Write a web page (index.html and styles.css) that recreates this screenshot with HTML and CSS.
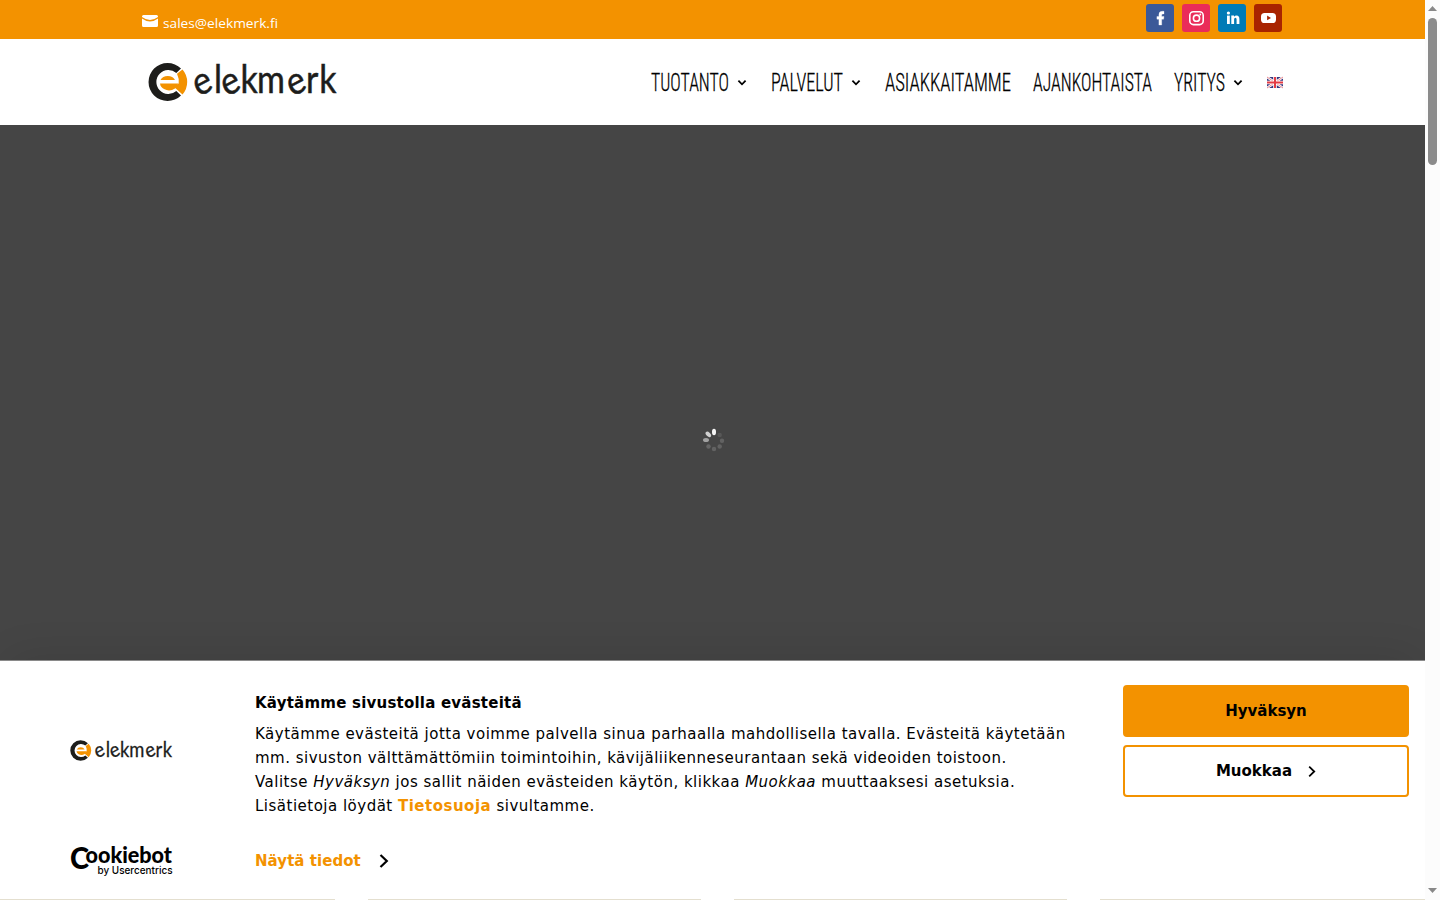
FILE: index.html
```
<!DOCTYPE html>
<html lang="fi">
<head>
    <meta charset="UTF-8">
    <meta name="viewport" content="width=device-width, initial-scale=1.0">
    <title>Elekmerk</title>
    <link rel="stylesheet" href="styles.css">
</head>
<body>

<!-- Shared symbols -->
<svg class="symbols" width="0" height="0">
    <symbol id="logo" viewBox="0 0 190 42">
        <path class="logo-dark" d="M33 7.600A19 19 0 1 0 33 34.400L28.300 30A12 12 0 1 1 28.300 12Z"/>
        <path class="logo-orange" d="M34.500 8.500A19 19 0 0 1 34.500 33.500L29.500 29L26 26L30.700 22.500V18L29 12.800Z"/>
        <path class="logo-orange" d="M12.500 19A8 7 0 0 1 27 19Z"/>
        <path class="logo-orange" d="M12 22.500H30.500L27 27.500Q21.500 31 16 28Q12.500 26 12 22.500Z"/>
        <g transform="scale(.88 1)">
            <text class="logo-text" x="57 75 89 105 124 163.500 179.500 194.500" y="36.200 32.300 36.200 32.300 32.300 36.200 32.300 32.300" rotate="-25 0 -25 0 0 -25 0 0">elekmerk</text>
        </g>
    </symbol>
    <symbol id="chevron" viewBox="0 0 10 16">
        <path d="M1.500 2L7.800 8L1.500 14" fill="none" stroke="currentColor" stroke-width="2.200"/>
    </symbol>
    <symbol id="arrow" viewBox="0 0 10 8">
        <path d="M1.400 1.700L5 5.300L8.600 1.700" fill="none" stroke="currentColor" stroke-width="1.800"/>
    </symbol>
</svg>

<div class="page">
    <div class="top-bar">
        <a class="mail" href="#">
            <svg width="16" height="12" viewBox="0 0 16 12">
                <path d="M1.500 0H14.500Q16 0 16 1.500V2Q8 8 0 2V1.500Q0 0 1.500 0ZM0 3.500Q8 9.500 16 3.500V10.500Q16 12 14.500 12H1.500Q0 12 0 10.500Z" fill="#fff"/>
            </svg>
            <svg class="mail-text" width="116" height="20"><text x="0" y="14" textLength="115" lengthAdjust="spacingAndGlyphs">sales@elekmerk.fi</text></svg>
        </a>
        <div class="social">
            <a class="facebook" href="#"><svg width="28" height="28"><path d="M12.900 21V15.200H10.900V12.500H12.900V10.700Q12.900 7.300 16.200 7.300H18V9.900H16.900Q15.700 9.900 15.700 11V12.500H18L17.600 15.200H15.700V21Z" fill="#fff" stroke="#fff" stroke-width=".3"/></svg></a>
            <a class="instagram" href="#"><svg width="28" height="28" fill="none" stroke="#fff"><rect x="7.800" y="7.800" width="13.400" height="12.800" rx="3.600" stroke-width="1.600"/><circle cx="14.500" cy="14.200" r="3.100" stroke-width="1.600"/><circle cx="18.300" cy="10.500" r=".9" fill="#fff" stroke="none"/></svg></a>
            <a class="linkedin" href="#"><svg width="28" height="28" fill="#fff"><circle cx="10.400" cy="9" r="1.600"/><rect x="9" y="11.600" width="2.800" height="8.400"/><path d="M13.300 11.600H16V12.800Q16.900 11.400 18.600 11.400Q21.400 11.400 21.400 14.900V20H18.600V15.500Q18.600 13.700 17.400 13.700Q16.100 13.700 16.100 15.500V20H13.300Z"/></svg></a>
            <a class="youtube" href="#"><svg width="28" height="28"><rect x="7" y="9" width="15" height="10" rx="3.600" fill="#fff"/><path d="M13.100 11.600L17 14L13.100 16.300Z" fill="#a82400"/></svg></a>
        </div>
    </div>

    <header class="header">
        <svg class="logo" width="190" height="42"><use href="#logo"/></svg>
        <nav class="menu">
            <a href="#"><svg width="78" height="30"><text x="0" y="24" textLength="78" lengthAdjust="spacingAndGlyphs">TUOTANTO</text></svg><svg class="arrow" width="10" height="8"><use href="#arrow"/></svg></a>
            <a href="#"><svg width="72" height="30"><text x="0" y="24" textLength="72" lengthAdjust="spacingAndGlyphs">PALVELUT</text></svg><svg class="arrow" width="10" height="8"><use href="#arrow"/></svg></a>
            <a href="#"><svg width="126" height="30"><text x="0" y="24" textLength="126" lengthAdjust="spacingAndGlyphs">ASIAKKAITAMME</text></svg></a>
            <a href="#"><svg width="119" height="30"><text x="0" y="24" textLength="119" lengthAdjust="spacingAndGlyphs">AJANKOHTAISTA</text></svg></a>
            <a href="#"><svg width="51" height="30"><text x="0" y="24" textLength="51" lengthAdjust="spacingAndGlyphs">YRITYS</text></svg><svg class="arrow" width="10" height="8"><use href="#arrow"/></svg></a>
            <a class="lang" href="#">
                <svg width="16" height="11" viewBox="0 0 16 11">
                    <rect width="16" height="11" fill="#35357d"/>
                    <path d="M0 0L16 11M16 0L0 11" stroke="#fff" stroke-width="2.400"/>
                    <path d="M0 0L16 11M16 0L0 11" stroke="#e0565f" stroke-width=".7"/>
                    <path d="M8 0V11M0 5.500H16" stroke="#fff" stroke-width="3.600"/>
                    <path d="M8 0V11M0 5.500H16" stroke="#e33b43" stroke-width="2"/>
                </svg>
            </a>
        </nav>
    </header>

    <main class="hero">
        <svg width="22" height="24" viewBox="-11 -12 22 24" fill="#fff">
            <ellipse cy="-8" rx="2" ry="3.300" opacity=".95"/>
            <ellipse cy="-8" rx="2" ry="3.300" opacity=".75" transform="rotate(-45)"/>
            <ellipse cy="-8" rx="2" ry="3" opacity=".5" transform="rotate(-90)"/>
            <circle cx="-5.500" cy="6.500" r="2.200" opacity=".18"/>
            <circle cx="0" cy="9" r="2.200" opacity=".16"/>
            <circle cx="5.700" cy="6.500" r="2.200" opacity=".16"/>
            <circle cx="8" cy=".7" r="2.200" opacity=".16"/>
            <circle cx="5.700" cy="-5" r="2.200" opacity=".1"/>
        </svg>
    </main>

    <section class="cookie-banner">
        <div class="brands">
            <svg width="103" height="23"><use href="#logo"/></svg>
            <svg class="cookiebot" width="104" height="32">
                <text class="cookiebot-c" x="0" y="23.500" textLength="19" lengthAdjust="spacingAndGlyphs">C</text>
                <text class="cookiebot-name" x="15.500" y="18" textLength="86.500" lengthAdjust="spacingAndGlyphs">ookiebot</text>
                <text class="cookiebot-by" x="27.500" y="28.500" textLength="75" lengthAdjust="spacingAndGlyphs">by Usercentrics</text>
            </svg>
        </div>
        <div class="cookie-text">
            <h2>Käytämme sivustolla evästeitä</h2>
            <p>Käytämme evästeitä jotta voimme palvella sinua parhaalla mahdollisella tavalla. Evästeitä käytetään<br>
            mm. sivuston välttämättömiin toimintoihin, kävijäliikenneseurantaan sekä videoiden toistoon.<br>
            Valitse <em>Hyväksyn</em> jos sallit näiden evästeiden käytön, klikkaa <em>Muokkaa</em> muuttaaksesi asetuksia.<br>
            Lisätietoja löydät <a href="#">Tietosuoja</a> sivultamme.</p>
            <a class="details" href="#">Näytä tiedot <svg width="10" height="16"><use href="#chevron"/></svg></a>
        </div>
        <div class="buttons">
            <button class="accept">Hyväksyn</button>
            <button class="edit">Muokkaa <svg width="8" height="13"><use href="#chevron"/></svg></button>
        </div>
    </section>
    <div class="next-row"><span></span><span></span><span></span></div>
</div>

<div class="scrollbar">
    <svg width="9" height="5"><path d="M0 5L4.500 0L9 5Z" fill="#888"/></svg>
    <div class="thumb"></div>
    <svg class="down" width="9" height="5"><path d="M0 0L4.500 5L9 0Z" fill="#888"/></svg>
</div>

</body>
</html>
```
FILE: styles.css
```
* {
    box-sizing: border-box;
}
body {
    margin: 0;
    display: flex;
    height: 900px;
    overflow: hidden;
    font-family: "DejaVu Sans", sans-serif;
    color: #000;
}
svg {
    display: block;
    flex: none;
}
.symbols {
    display: none;
}
a {
    color: inherit;
    text-decoration: none;
}
.page {
    width: 1425px;
    display: flex;
    flex-direction: column;
    overflow: hidden;
}
.top-bar {
    height: 39px;
    padding: 4px 143px 0 142px;
    display: flex;
    justify-content: space-between;
    background-color: #f39200;
}
.mail {
    display: flex;
    gap: 5px;
    padding-top: 11px;
}
.mail-text {
    overflow: visible;
    margin-top: -1px;
    font: 500 13.5px "Open Sans", sans-serif;
    fill: #fff;
}
.social {
    display: flex;
    gap: 8px;
}
.social a {
    width: 28px;
    height: 28px;
    border-radius: 3px;
    overflow: hidden;
}
.facebook {
    background-color: #3b5998;
}
.instagram {
    background-color: #ea2c59;
}
.linkedin {
    background-color: #007bb6;
}
.youtube {
    background-color: #a82400;
}
.header {
    height: 86px;
    padding: 0 142px 0 148px;
    display: flex;
    align-items: center;
    justify-content: space-between;
    background-color: #fff;
}
.logo-dark {
    fill: #1d1d1b;
}
.logo-orange {
    fill: #f39200;
}
.logo-text {
    font: 400 38.5px Lato, sans-serif;
    fill: #1d1d1b;
    stroke: #1d1d1b;
    stroke-width: 0.5px;
}
.menu {
    display: flex;
    align-items: center;
    gap: 22px;
}
.menu a {
    display: flex;
    align-items: center;
    gap: 8px;
}
.menu svg {
    overflow: visible;
}
.menu text {
    font-family: Roboto, sans-serif;
    font-size: 26.5px;
    font-weight: 300;
    font-stretch: 75%;
    stroke: #000;
    stroke-width: 0.3px;
}
.menu .arrow {
    margin: 2px 2px 0 0;
}
.hero {
    height: 535px;
    padding: 303px 0 0 2px;
    display: flex;
    justify-content: center;
    background-color: #454545;
}
.cookie-banner {
    height: 239px;
    padding: 24px 16px 0 70px;
    display: flex;
    border-top: 1px solid #8a8a8a;
    background-color: #fff;
    box-shadow: 0 -10px 40px -10px rgba(0, 0, 0, 0.12);
    z-index: 1;
}
.brands {
    width: 185px;
    padding-top: 54px;
    display: flex;
    flex-direction: column;
    gap: 83px;
}
.cookiebot {
    overflow: visible;
}
.cookiebot-c {
    font: 900 31px Lato, sans-serif;
}
.cookiebot-name {
    font: 900 23px Lato, sans-serif;
}
.cookiebot-by {
    font: 500 10.5px Inter, sans-serif;
}
.cookie-text {
    width: 868px;
    font-size: 15px;
    line-height: 24px;
    letter-spacing: 0.495px;
    white-space: nowrap;
}
.cookie-text h2 {
    margin: 6px 0 7px;
    font-size: 15px;
    line-height: 24px;
    letter-spacing: 0.22px;
}
.cookie-text p {
    margin: 0 0 31px;
}
.cookie-text a {
    color: #f39200;
    font-weight: bold;
}
.cookie-text .details {
    display: flex;
    align-items: center;
    gap: 18px;
    letter-spacing: 0.05px;
}
.cookie-text .details svg {
    color: #000;
}
.buttons {
    width: 286px;
    display: flex;
    flex-direction: column;
    gap: 8px;
}
.buttons button {
    height: 52px;
    display: flex;
    align-items: center;
    justify-content: center;
    gap: 16px;
    border: 2px solid #f39200;
    border-radius: 4px;
    font: bold 15px "DejaVu Sans", sans-serif;
    color: #000;
    background-color: #fff;
}
.buttons .accept {
    background-color: #f39200;
}
.edit svg {
    margin-top: 1px;
}
.next-row {
    height: 1px;
    padding-left: 335px;
    display: flex;
    gap: 333px;
    background-color: #e4dfcf;
    z-index: 2;
}
.next-row span {
    width: 33px;
    background-color: #fff;
}
.scrollbar {
    width: 15px;
    height: 900px;
    padding: 6px 0 7px;
    display: flex;
    flex-direction: column;
    align-items: center;
    background-color: #fcfcfc;
}
.thumb {
    width: 9px;
    height: 147px;
    margin-top: 7px;
    border-radius: 5px;
    background-color: #8b8b8b;
}
.down {
    margin-top: auto;
}
```
